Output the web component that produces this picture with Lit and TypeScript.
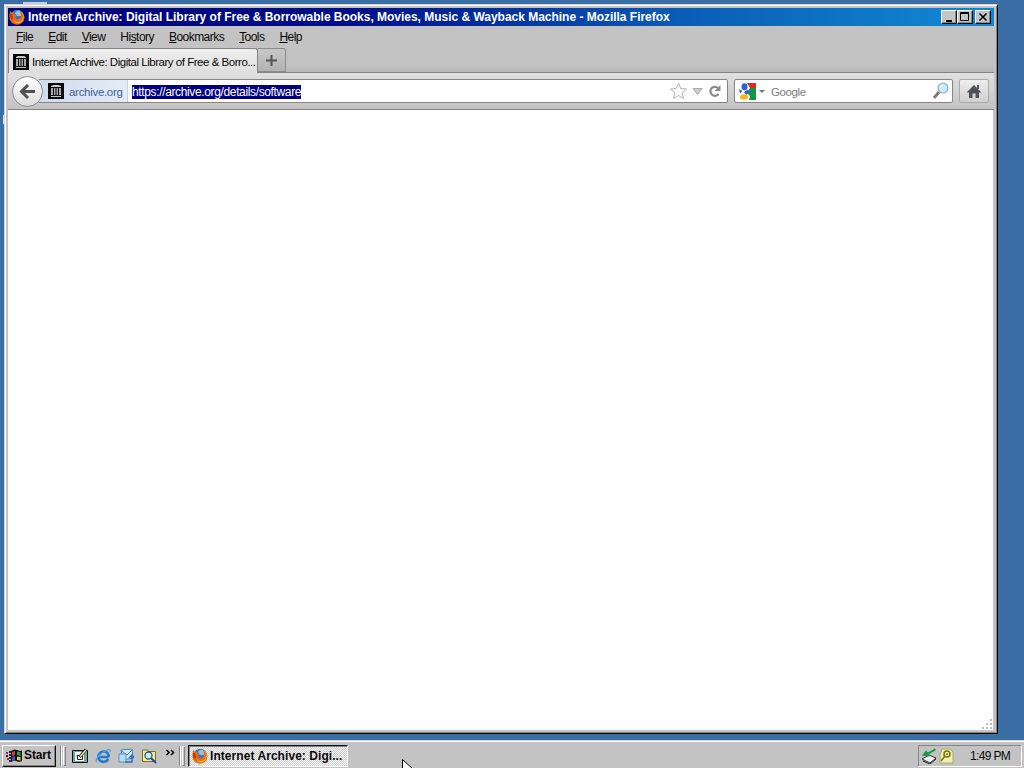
import { LitElement, css, html, svg } from "lit";
import { customElement, property } from "lit/decorators.js";

const firefox = html`<svg width="16" height="16" viewBox="0 0 16 16">
  <circle cx="8.3" cy="7.6" r="6.8" fill="#3d74b8" />
  <path d="M7 2.5 10 1.5 13 4 12 7 8 7 6 4z" fill="#8fc2e8" />
  <path d="M1 2 3 4 5 3.6 5.5 5.5 8 6.5 6 8 7 10 10 10 12 8 12 5 11 2 14 4 15.6 8 14.5 12.5 11 15.3 7 15.8 3 14 .6 10.5 .4 6z" fill="#e66a12" />
  <path d="M12 3 14 6 13.6 10 11 12.8 7.5 13 5 11 6 13.5 10 14.5 13.5 12 14.8 8 14 5z" fill="#fbb62b" />
  <path d="M1 5 3 5 4 9 3 11 1.4 9z" fill="#b83a0c" />
</svg>`;

const temple = html`<svg width="16" height="16" viewBox="0 0 16 16">
  <path d="M0 0H16V16H0z" fill="#080808" />
  <path d="M3 3 5 2h6l2 1v1H3zM3 13h10v1H3z" fill="#c4c4c4" />
  <path d="M3 5h2v7H3zM6 5h1.500v7H6zM8.500 5H10v7H8.500zM11 5h2v7h-2z" fill="#a8a8a8" />
</svg>`;

const windowsFlag = html`<svg width="17" height="14" viewBox="0 0 17 14">
  <path d="M0 3h2v2H0zM1 9h2v2H1z" fill="#a3302a" />
  <path d="M0 6h2v2H0zM3 2h2v2H3zM3 5h2v2H3zM3 8h2v2H3zM3 11h2v2H3z" fill="#22223c" />
  <path d="M5 2 8 .5 11 1 14 2 16 1.500V12l-3 1-3-1-2-.500-3 1.500z" fill="#111" />
  <path d="M6 3 9 2v4L6 7z" fill="#d93a30" />
  <path d="M11 2.500 14.500 3v4L11 6z" fill="#27a04a" />
  <path d="M6 8 9 7v4l-3 1z" fill="#3158d4" />
  <path d="M11 7.500 14.500 8v3.500L11 11z" fill="#e6cf36" />
</svg>`;

const quickIcons = [
  svg`<path d="M.5 2.500h15v12H.5z" fill="#6ba79f" stroke="#111" /><path d="M3 4h9v9H3z" fill="#fff" /><path d="M4.500 7.500h3M5.500 7.500v4h5V8" fill="none" stroke="#222" /><path d="M7.500 9 14 1.500" stroke="#222" stroke-width="3" /><path d="M8 8.500 14 2" stroke="#efe39a" stroke-width="1.500" />`,
  svg`<path d="M13.500 9H5.200M13.300 11C12 14 7 15 4.500 12 1.500 8 5 3.500 9 3.500c3 0 5 2.500 4.500 5.500" fill="none" stroke="#2678c8" stroke-width="2.600" /><path d="M2 14C-1 12 5 5 12 2c3-1 4 0 2.500 2" fill="none" stroke="#4fa5e2" stroke-width="1.300" />`,
  svg`<path d="M3 2 14 1l1 9-10 2z" fill="#d5ebff" stroke="#4384c9" /><path d="m4 3 5 4 5-5" fill="none" stroke="#4384c9" /><path d="M1 6h7v8H1z" fill="#b8dcfb" stroke="#5691ce" /><path d="M7 14h7V8m-3 2 3-3 2 3" fill="none" stroke="#2370c4" stroke-width="1.500" />`,
  svg`<path d="M1.500 3.500V2h5l1 1.500h7v10h-13z" fill="#f6ed91" stroke="#77702d" /><circle cx="7.500" cy="7.500" r="3.500" fill="#c4f1f5" stroke="#275889" stroke-width="1.300" /><path d="m10 10 5 5" stroke="#2145a2" stroke-width="2" />`,
];

const menus = [
  { before: "", key: "F", after: "ile" },
  { before: "", key: "E", after: "dit" },
  { before: "", key: "V", after: "iew" },
  { before: "Hi", key: "s", after: "tory" },
  { before: "", key: "B", after: "ookmarks" },
  { before: "", key: "T", after: "ools" },
  { before: "", key: "H", after: "elp" },
];

@customElement("browser-window")
export class BrowserWindow extends LitElement {
  @property() heading = "";
  @property() url = "";

  static override styles = css`
    :host {
      box-sizing: border-box;
      display: flex;
      flex-direction: column;
      padding: 3px;
      background: #c3c3c3;
      border: 1px solid;
      border-color: #d6d3ce #080808 #080808 #d6d3ce;
      box-shadow: inset 1px 1px #fff, inset -1px -1px #858585;
    }
    svg {
      display: block;
      flex: none;
    }
    .title {
      display: flex;
      align-items: center;
      height: 18px;
      padding: 0 3px 0 1px;
      color: #fff;
      font-weight: bold;
      background: linear-gradient(90deg, #000078 0%, #00108a 35%, #0a5cb5 68%, #1084d0 96%);
    }
    .title-text {
      flex: 1;
      margin-left: 3px;
      white-space: nowrap;
      letter-spacing: -0.02px;
    }
    .control {
      box-sizing: border-box;
      width: 16px;
      height: 14px;
      padding: 1px 2px;
      background: #c5c5c5;
      border: 1px solid;
      border-color: #fff #111 #111 #fff;
      box-shadow: inset -1px -1px #858585;
    }
    .control.close {
      margin-left: 2px;
    }
    .menus {
      display: flex;
      gap: 15px;
      height: 22px;
      padding-left: 8px;
      line-height: 22px;
      letter-spacing: -0.54px;
    }
    u {
      text-underline-offset: 1px;
      text-decoration-thickness: 1px;
    }
    .tabs {
      display: flex;
      height: 24px;
      border-bottom: 1px solid #858585;
      background: linear-gradient(#c2c2c2 70%, #b9b9b9);
    }
    .tab {
      box-sizing: border-box;
      display: flex;
      align-items: center;
      width: 250px;
      height: 25px;
      padding: 1px 0 0 4px;
      background: linear-gradient(#eee, #dedede);
      border: 1px solid #858585;
      border-bottom: 0;
      border-radius: 3px 3px 0 0;
    }
    .tab-text {
      margin-left: 3px;
      white-space: nowrap;
      font-size: 11.5px;
      letter-spacing: -0.47px;
    }
    .new-tab {
      box-sizing: border-box;
      display: grid;
      place-items: center;
      width: 28px;
      height: 24px;
      border: 1px solid #8c8c8c;
      border-left: 0;
      background: linear-gradient(#c7c7c7, #b2b2b2);
      border-radius: 0 3px 0 0;
    }
    .nav {
      display: flex;
      align-items: center;
      height: 36px;
      padding: 0 5px 0 4px;
      border-bottom: 1px solid #858585;
      background: linear-gradient(#e1e1e1, #c2c2c2);
    }
    .back {
      box-sizing: border-box;
      position: relative;
      display: grid;
      place-items: center;
      width: 31px;
      height: 31px;
      border: 1px solid #8d8d8d;
      border-radius: 50%;
      background: linear-gradient(#fff, #dcdcdc);
    }
    .field {
      box-sizing: border-box;
      display: flex;
      align-items: center;
      height: 24px;
      border: 1px solid #858585;
      border-radius: 2px;
      background: #fff;
    }
    .location {
      width: 690px;
      margin-left: -5px;
      border-left: 0;
    }
    .identity {
      box-sizing: border-box;
      display: flex;
      align-items: center;
      width: 90px;
      height: 22px;
      padding-left: 10px;
      background: linear-gradient(90deg, #cfdbed, #e4ecf8);
      border-right: 1px solid #c5d0e2;
      color: #445f9a;
    }
    .site {
      margin-left: 5px;
      padding-top: 1px;
      font-size: 11.5px;
      letter-spacing: -0.3px;
    }
    .address {
      flex: 1;
      padding: 1px 0 0 4px;
    }
    .selected {
      display: block;
      width: max-content;
      height: 14px;
      line-height: 15px;
      background: #000080;
      color: #fff;
      letter-spacing: -0.36px;
    }
    .search {
      width: 219px;
      margin-left: 6px;
      padding: 0 2px 0 4px;
    }
    .hint {
      flex: 1;
      margin-left: 6px;
      padding-top: 1px;
      color: #7c7c7c;
      font-size: 11.5px;
      letter-spacing: -0.4px;
    }
    .home {
      box-sizing: border-box;
      display: grid;
      place-items: center;
      width: 30px;
      height: 24px;
      margin-left: 6px;
      border: 1px solid #aaa;
      border-radius: 2px;
      background: linear-gradient(#eee, #cfcfcf);
    }
    .page {
      flex: 1;
      display: flex;
      align-items: flex-end;
      justify-content: flex-end;
      background: #fff;
      margin-right: 1px;
    }
  `;

  private _controls() {
    return html`
      <span class="control"><svg width="10" height="10"><path d="M2 9h6" stroke="#000" stroke-width="2" /></svg></span>
      <span class="control"><svg width="10" height="10"><path d="M.5.5h8v8h-8zM0 1.500h9" fill="none" stroke="#000" /></svg></span>
      <span class="control close"><svg width="10" height="10"><path d="m1.500 1.500 7 7m0-7-7 7" stroke="#000" stroke-width="1.600" /></svg></span>
    `;
  }

  private _search() {
    return html`<div class="field search">
      <svg width="17" height="17" viewBox="0 0 17 17">
        <path d="M8 0h9v8H8z" fill="#dc2b20" />
        <path d="M8 5h9v12H8z" fill="#169441" />
        <path d="M0 0h8l3 5-3 5 3 3-1 4H0z" fill="#fff" />
        <ellipse cx="5.500" cy="3.700" rx="3" ry="3.500" fill="#2d63d1" />
        <path d="M0 6 3.500 8 1 10.500zM5 9l4-2.500 2 2.500-4 3z" fill="#2d63d1" />
        <ellipse cx="5" cy="14" rx="4" ry="2.800" fill="#f7b51c" />
      </svg>
      <svg width="9" height="5"><path d="M3 1h6L6 4z" fill="#777" /></svg>
      <span class="hint">Google</span>
      <svg width="18" height="18" viewBox="0 0 18 18">
        <path d="m2 16 5-6" stroke="#8d7467" stroke-width="3" />
        <circle cx="11" cy="6" r="4.900" fill="#cceafb" stroke="#8cb8d7" stroke-width="1.400" />
        <path d="M8 6q0-3 3-3" fill="none" stroke="#fff" />
      </svg>
    </div>`;
  }

  override render() {
    return html`
      <div class="title">
        ${firefox}
        <span class="title-text">${this.heading} - Mozilla Firefox</span>
        ${this._controls()}
      </div>
      <div class="menus">
        ${menus.map((m) => html`<span>${m.before}<u>${m.key}</u>${m.after}</span>`)}
      </div>
      <div class="tabs">
        <div class="tab">
          ${temple}
          <span class="tab-text">Internet Archive: Digital Library of Free &amp; Borro...</span>
        </div>
        <div class="new-tab">
          <svg width="11" height="11"><path d="M5.500 0v11M0 5.500h11" stroke="#555" stroke-width="2" /></svg>
        </div>
      </div>
      <div class="nav">
        <div class="back">
          <svg width="17" height="17" viewBox="0 0 17 17"><path d="m9 2-6.500 6.500L9 15M3 8.500h13" fill="none" stroke="#505050" stroke-width="3" /></svg>
        </div>
        <div class="field location">
          <div class="identity">${temple}<span class="site">archive.org</span></div>
          <div class="address"><span class="selected">${this.url}</span></div>
          <svg width="58" height="20" viewBox="0 0 58 20">
            <path d="m9.500 2 2.300 5.500 5.700.5-4.300 3.800 1.300 5.700-5-3-5 3 1.300-5.700L1.500 8l5.700-.5z" fill="#fafafa" stroke="#b4b4b4" />
            <path d="M24 7.500h9l-4.500 6z" fill="#ccc" stroke="#aaa" />
            <path d="M49 7a4.500 4.500 0 1 0 .500 6" fill="none" stroke="#8a8a8a" stroke-width="2.200" />
            <path d="M51.500 4v6h-6z" fill="#8a8a8a" />
          </svg>
        </div>
        ${this._search()}
        <div class="home">
          <svg width="16" height="15" viewBox="0 0 16 15"><path d="M8 1 15.500 8.500H13V14H9.500V9.500h-3V14H3V8.500H.5zM11 1h2v4h-2z" fill="#4f5357" /></svg>
        </div>
      </div>
      <div class="page">
        <svg width="12" height="12"><path d="M9 1h2v2H9zM5 5h2v2H5zM9 5h2v2H9zM1 9h2v2H1zM5 9h2v2H5zM9 9h2v2H9z" fill="#bbb" /></svg>
      </div>
    `;
  }
}

@customElement("task-bar")
export class TaskBar extends LitElement {
  @property() time = "";

  static override styles = css`
    :host {
      box-sizing: border-box;
      display: flex;
      align-items: center;
      height: 28px;
      padding: 2px 2px 0;
      background: #c3c3c3;
      border-top: 1px solid #d6d3ce;
      box-shadow: inset 0 1px #fff;
    }
    svg {
      display: block;
      flex: none;
    }
    .start,
    .task {
      box-sizing: border-box;
      display: flex;
      align-items: center;
      height: 22px;
      font-weight: bold;
      white-space: nowrap;
    }
    .start {
      width: 54px;
      padding-left: 3px;
      gap: 1px;
      border: 1px solid;
      border-color: #fff #111 #111 #fff;
      box-shadow: inset -1px -1px #858585;
      letter-spacing: -0.1px;
    }
    .start span {
      padding-bottom: 1px;
    }
    .rule {
      width: 0;
      height: 20px;
      margin-left: 4px;
      border-left: 1px solid #858585;
      border-right: 1px solid #fff;
    }
    .grip {
      width: 1px;
      height: 18px;
      margin: 0 0 0 1px;
      border: 1px solid;
      border-color: #fff #858585 #858585 #fff;
    }
    .quick {
      display: flex;
      gap: 7px;
      margin-left: 6px;
    }
    .more {
      width: 9px;
      height: 16px;
      margin-left: 9px;
    }
    .task {
      width: 160px;
      margin-left: 3px;
      padding-left: 3px;
      gap: 2px;
      border: 1px solid;
      border-color: #111 #fff #fff #111;
      box-shadow: inset 1px 1px #858585;
      background: repeating-conic-gradient(#fff 0 25%, #c9c9c9 0 50%) 0 0 / 2px 2px;
      letter-spacing: 0.06px;
    }
    .tray {
      box-sizing: border-box;
      display: flex;
      align-items: center;
      width: 104px;
      height: 22px;
      margin-left: auto;
      padding-left: 2px;
      gap: 2px;
      border: 1px solid;
      border-color: #858585 #fff #fff #858585;
    }
    .clock {
      margin-left: 14px;
      letter-spacing: -0.65px;
    }
  `;

  override render() {
    return html`
      <div class="start">${windowsFlag}<span>Start</span></div>
      <div class="rule"></div>
      <div class="grip"></div>
      <div class="quick">
        ${quickIcons.map((icon) => html`<svg width="16" height="16" viewBox="0 0 16 16">${icon}</svg>`)}
      </div>
      <svg class="more" viewBox="0 0 9 16">
        <path d="m.5 2 2.500 2.500L.5 7M5 2l2.500 2.500L5 7" fill="none" stroke="#000" stroke-width="1.500" />
      </svg>
      <div class="rule"></div>
      <div class="grip"></div>
      <div class="task">${firefox}<span>Internet Archive: Digi...</span></div>
      <div class="tray">
        <svg width="16" height="16" viewBox="0 0 16 16">
          <path d="m1 11 7-4 7 3-6 5z" fill="#eee" stroke="#333" />
          <path d="m2 13 7 3 6-5" fill="none" stroke="#222" />
          <path d="m14 .5-7 4-2-2L1 7.500l8 1-1.500-2L15 2z" fill="#159a42" />
        </svg>
        <svg width="15" height="16" viewBox="0 0 15 16">
          <path d="M3 1h8l3 3v11H1V7z" fill="#eef0b5" stroke="#aaa969" />
          <circle cx="8" cy="6" r="3" fill="#f4f4a9" stroke="#77780b" stroke-width="1.600" />
          <path d="m6 8-4 5M7 6h2" stroke="#77780b" stroke-width="1.600" />
        </svg>
        <span class="clock">${this.time}</span>
      </div>
    `;
  }
}

@customElement("app-root")
export class AppRoot extends LitElement {
  static override styles = css`
    :host {
      position: relative;
      display: flex;
      flex-direction: column;
      justify-content: flex-end;
      width: 1024px;
      height: 768px;
      overflow: hidden;
      background: #3a6ea5;
      font: 12px "Liberation Sans", Arial, sans-serif;
      color: #080808;
      cursor: default;
    }
    browser-window {
      position: absolute;
      left: 4px;
      top: 4px;
      width: 994px;
      height: 730px;
    }
    .icon-edge {
      position: absolute;
      left: 23px;
      top: 2px;
      width: 24px;
      height: 2px;
      background: #c9cde8;
    }
    .label-edge {
      position: absolute;
      left: 3px;
      top: 115px;
      width: 1px;
      height: 9px;
      background: #e4edf4;
    }
    .pointer {
      position: absolute;
      left: 402px;
      top: 759px;
    }
  `;

  override render() {
    return html`
      <div class="icon-edge"></div>
      <div class="label-edge"></div>
      <browser-window
        heading="Internet Archive: Digital Library of Free &amp; Borrowable Books, Movies, Music &amp; Wayback Machine"
        url="https://archive.org/details/software"
      ></browser-window>
      <task-bar time="1:49 PM"></task-bar>
      <svg class="pointer" width="13" height="20"><path d="M.5.5v16l4-4 3 6 2-1-3-6h6z" fill="#fff" stroke="#000" /></svg>
    `;
  }
}
